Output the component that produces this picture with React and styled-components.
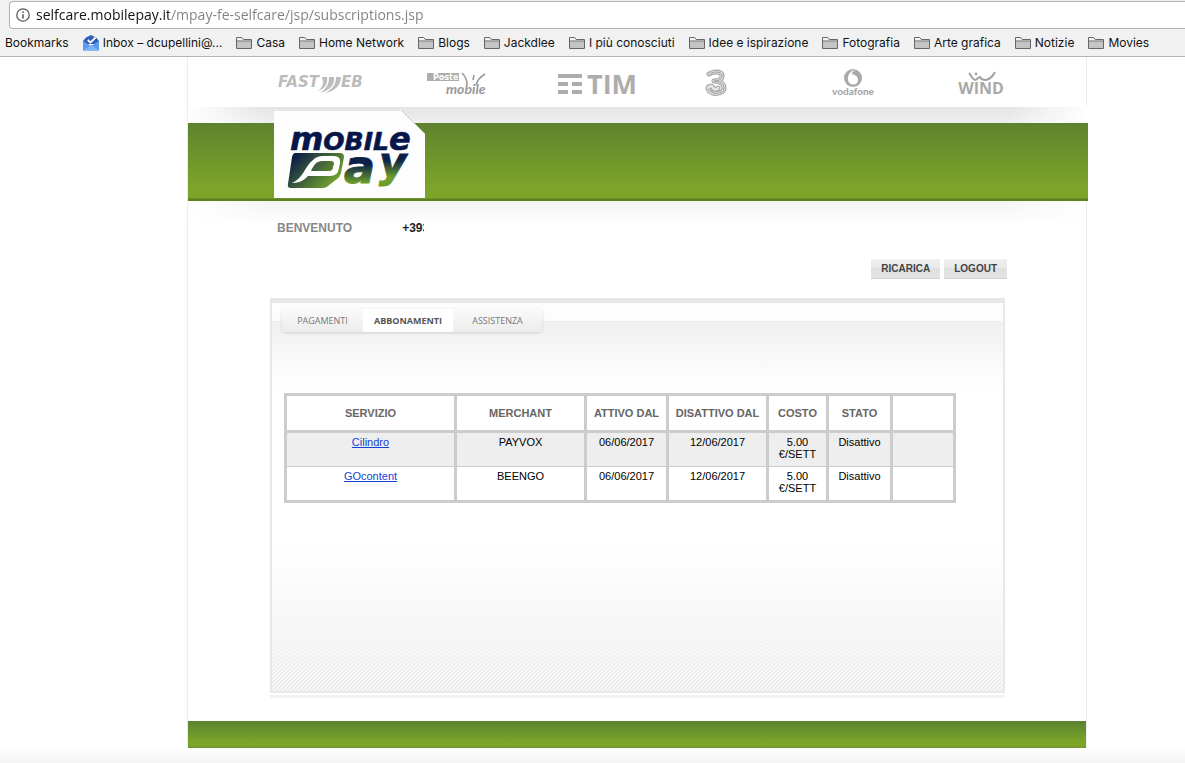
import React from "react";
import styled, { createGlobalStyle } from "styled-components";

const GlobalStyle = createGlobalStyle`
  * {
    box-sizing: border-box;
  }

  body {
    margin: 0;
    background: #fff;
    font-family: "Liberation Sans", Arial, sans-serif;
  }
`;

const Screen = styled.div`
  display: flex;
  flex-direction: column;
  min-height: 100vh;
`;

/* browser bar */

const Browser = styled.header`
  background: #f1f1f1;
  border-bottom: 1px solid #b4b4b4;
  padding-top: 1px;
  overflow: hidden;
  font-family: Inter, "Noto Sans", sans-serif;
`;

const Address = styled.label`
  display: flex;
  align-items: center;
  gap: 6px;
  height: 28px;
  margin-left: 9px;
  padding-left: 6px;
  background: #fff;
  border: 1px solid #b4b4b4;
  border-right: 0;
  border-radius: 4px 0 0 4px;
`;

const AddressInput = styled.input`
  flex: 1;
  min-width: 0;
  padding: 0;
  border: 0;
  outline: 0;
  font: 14px/20px "Open Sans", "Noto Sans", sans-serif;
  color: transparent;
  background: linear-gradient(90deg, #111 133px, #808080 133px);
  -webkit-background-clip: text;
  background-clip: text;
`;

const Bookmarks = styled.nav`
  display: flex;
  align-items: center;
  gap: 14px;
  height: 27px;
  padding-left: 5px;
`;

const Bookmark = styled.a`
  display: flex;
  align-items: center;
  flex: none;
  gap: 4px;
  color: #111;
  font-size: 12px;
  line-height: 16px;
  text-decoration: none;
  white-space: nowrap;
`;

/* page */

const Page = styled.div`
  margin: 0 98px 0 187px;
  border: 1px solid #ededed;
  border-width: 0 1px;
`;

const Operators = styled.div`
  display: grid;
  grid-template-columns: 136px 136px 142px 100px 172px 84px;
  justify-items: center;
  align-items: center;
  height: 50px;
  padding: 3px 0 0 65px;

  svg {
    display: block;
    overflow: visible;
  }
`;

const Banner = styled.div`
  margin-right: -2px;
  padding: 4px 0 3px 86px;
  background:
    linear-gradient(90deg, #fff, #fff0 80px calc(100% - 80px), #fff) top / 100% 16px no-repeat,
    linear-gradient(#e4e4e4, #efefef) top / 100% 16px no-repeat,
    linear-gradient(#5e8030, #62882e 8px, #7ba428 64px, #7ba428 75px, #5f8020 76px) 0 16px no-repeat;
`;

const Welcome = styled.div`
  display: flex;
  align-items: center;
  gap: 50px;
  padding: 20px 0 0 89px;
  height: 34px;
  background:
    linear-gradient(90deg, #fff, #fff0 80px calc(100% - 80px), #fff) top / 100% 21px no-repeat,
    linear-gradient(#f4f4f4, #fdfdfd) top / 100% 21px no-repeat;
  font-size: 12px;
  line-height: 14px;
  font-weight: bold;
  color: #888;
`;

const Phone = styled.span`
  width: 22px;
  overflow: hidden;
  color: #222;
`;

const Actions = styled.div`
  display: flex;
  justify-content: flex-end;
  gap: 4px;
  padding: 24px 79px 19px 0;
`;

const Action = styled.button`
  height: 20px;
  padding: 0 10px;
  border: 0;
  border-bottom: 1px solid #cfcfcf;
  background: linear-gradient(#f0f0f0, #e8e8e8 50%, #dfdfdf 50%, #e4e4e4);
  color: #444;
  font: bold 10px/12px "Liberation Sans", Arial, sans-serif;
`;

const PanelFrame = styled.div`
  margin: 0 81px 23px 82px;
  padding-bottom: 2px;
  border-bottom: 3px solid #f3f3f3;
`;

const Panel = styled.main`
  min-height: 395px;
  padding: 6px 10px;
  border: 2px solid #e8e8e8;
  border-top: 5px solid #e6e6e6;
  background:
    linear-gradient(#fdfdfd 18px, #fff0 18px),
    linear-gradient(#f0f0f0 18px, #fff 86px, #fff 240px, #fff0 100%),
    linear-gradient(135deg, #e6e6e6 12%, #f8f8f8 13% 49%, #e6e6e6 50% 62%, #f8f8f8 63%) 0 0 / 4px 4px;
`;

const Tabs = styled.nav`
  display: inline-flex;
  height: 23px;
  border-radius: 3px;
  background: linear-gradient(#fafafa, #ececec);
  box-shadow: 0 1px 3px #ccc;
`;

const Tab = styled.a`
  display: flex;
  align-items: center;
  justify-content: center;
  width: ${(p) => (p.$active ? "90px" : "89px")};
  background: ${(p) => (p.$active ? "#fff" : "none")};
  color: ${(p) => (p.$active ? "#555" : "#777")};
  font: ${(p) => (p.$active ? "bold" : "normal")} 9px/12px "Open Sans", "Noto Sans", sans-serif;
  text-decoration: none;

  &:first-child {
    width: 81px;
  }
`;

const Table = styled.table`
  width: 672px;
  margin: 61px 0 0 2px;
  border-collapse: collapse;
  table-layout: fixed;
  border: 3px solid #ccc;
  background: #fff;
  font-size: 11px;
  line-height: 12px;
  text-align: center;
`;

const Th = styled.th`
  width: ${(p) => p.$width};
  height: 37px;
  padding: 0;
  border: 3px solid #ccc;
  color: #666;
  white-space: nowrap;
`;

const Row = styled.tr`
  height: 35px;
  background: ${(p) => (p.$shaded ? "#eee" : "#fff")};
`;

const Td = styled.td`
  padding: 3px 4px;
  border: 3px solid #ccc;
  border-width: 1px 3px;
  vertical-align: top;
  color: #000;

  a {
    color: #1342d6;
  }
`;

const Footer = styled.footer`
  height: 27px;
  background: linear-gradient(#5e8230, #64902d 8px, #7ba428 20px, #7ba428 25px, #6d9130);
`;

const PageEnd = styled.div`
  flex: 1;
  background: linear-gradient(#fff, #f4f4f4);
`;

const LogoSvg = styled.svg`
  display: block;
`;

const folders = [
  "Casa",
  "Home Network",
  "Blogs",
  "Jackdlee",
  "I più conosciuti",
  "Idee e ispirazione",
  "Fotografia",
  "Arte grafica",
  "Notizie",
  "Movies",
];

const columns = [
  ["SERVIZIO", "170px"],
  ["MERCHANT", "130px"],
  ["ATTIVO DAL", "82px"],
  ["DISATTIVO DAL", "100px"],
  ["COSTO", "60px"],
  ["STATO", "64px"],
  ["", "auto"],
];

const subscriptions = [
  ["Cilindro", "PAYVOX", "06/06/2017", "12/06/2017", "5.00 €/SETT", "Disattivo"],
  ["GOcontent", "BEENGO", "06/06/2017", "12/06/2017", "5.00 €/SETT", "Disattivo"],
];

function InfoIcon() {
  return (
    <svg width="14" height="14" viewBox="0 0 14 14" fill="none" stroke="#5a5a5a">
      <circle cx="7" cy="7" r="6.2" strokeWidth="1.3" />
      <path d="M7 6.2v4.3M7 3.4v1.6" strokeWidth="1.6" />
    </svg>
  );
}

function FolderIcon() {
  return (
    <svg width="16" height="14" viewBox="0 0 16 14">
      <path d="M.5 12.5v-11h5.2l1.6 2h8.2v9z" fill="#f4f4f4" stroke="#666" />
      <path d="M1 5.5h14V12H1z" fill="#c4c4c4" />
      <path d="M.5 5h15" stroke="#666" />
    </svg>
  );
}

function InboxIcon() {
  return (
    <svg width="16" height="16" viewBox="0 0 16 16">
      <path d="M0 6l3-3.500L8 0l5 2.500L16 6v3H0z" fill="#2f5fb8" />
      <path d="M0 6l8 5 8-5v9.500H0z" fill="#5b9cf0" />
      <path d="M0 15.500L8 10l8 5.500z" fill="#79b2f8" />
      <path d="M4.800 5l2.600 2.600L12.500 2.500" fill="none" stroke="#fff" strokeWidth="1.800" />
    </svg>
  );
}

function FastwebLogo() {
  return (
    <svg width="86" height="24" viewBox="0 0 86 24" fill="#bcbcbc">
      <g fontFamily="DejaVu Sans" fontWeight="bold" fontStyle="italic" fontSize="15">
        <text x="0" y="15">FAST</text>
        <text x="63" y="15">EB</text>
      </g>
      <path d="M44 5h5c1 6-1 11-9 14 5-4 6-8 4-14z" />
      <path d="M51 5h5c1 7-3 13-14 16 7-5 9-9 9-16z" />
      <path d="M58 5h5c0 7-5 14-16 16 8-4 11-9 11-16z" />
    </svg>
  );
}

function PosteLogo() {
  return (
    <svg width="62" height="28" viewBox="0 0 62 28">
      <path d="M1 3h32v8H1z" fill="#adadad" />
      <text x="7" y="10" fill="#fff" fontFamily="DejaVu Sans" fontWeight="bold" fontSize="8">Poste</text>
      <text x="20" y="24" fill="#999" fontFamily="Lato" fontWeight="bold" fontStyle="italic" fontSize="14">mobile</text>
      <path d="M36 3c3 3 5 6 5 11M48 5l-1 5M59 4c-5 3-8 7-9 11" fill="none" stroke="#999" strokeWidth="1.500" />
    </svg>
  );
}

function TimLogo() {
  return (
    <svg width="78" height="24" viewBox="0 0 78 24" fill="#adadad">
      <path d="M1 2h24v4H1zM1 10h10v4H1zM15 10h10v4H15zM1 18h10v4H1zM15 18h10v4H15z" />
      <text x="30" y="22" fontFamily="Open Sans" fontWeight="bold" fontSize="27">TIM</text>
    </svg>
  );
}

function TreLogo() {
  return (
    <svg width="24" height="30" viewBox="0 0 24 30" fill="none" strokeLinecap="round" strokeLinejoin="round">
      <path d="M4 5c4-3 14-3 13 2 0 4-5 5-8 5 5 0 10 2 10 7 0 7-14 7-16 1 0-3 4-4 5-1 1 2 4 2 5 0" stroke="#a8a8a8" strokeWidth="5" />
      <path d="M4 5c4-3 14-3 13 2 0 4-5 5-8 5 5 0 10 2 10 7 0 7-14 7-16 1 0-3 4-4 5-1 1 2 4 2 5 0" stroke="#e6e6e6" strokeWidth="2.600" />
      <path d="M4 5c4-3 14-3 13 2 0 4-5 5-8 5 5 0 10 2 10 7 0 7-14 7-16 1" stroke="#999" strokeWidth="1" />
    </svg>
  );
}

function VodafoneLogo() {
  return (
    <svg width="46" height="30" viewBox="0 0 46 30" fill="#a9a9a9">
      <circle cx="23" cy="9" r="9" />
      <path d="M26 1c-3 1-4 2-4 4 4 1 6 3 6 6 0 6-9 6-10 0-1-5 3-10 8-10z" fill="#fff" />
      <text x="23" y="26" textAnchor="middle" fontFamily="Lato" fontWeight="900" fontSize="10">vodafone</text>
    </svg>
  );
}

function WindLogo() {
  return (
    <svg width="50" height="30" viewBox="0 0 50 30" fill="#a9a9a9">
      <path
        d="M13 4c2 2 3 6 6 7 2 0 3-3 5-3 1 2 3 3 6 3 4-1 7-4 9-8"
        fill="none"
        stroke="#a0a0a0"
        strokeWidth="2"
      />
      <circle cx="20" cy="5" r="1.400" />
      <text x="25" y="25" textAnchor="middle" fontFamily="Open Sans" fontWeight="bold" fontSize="16">WIND</text>
    </svg>
  );
}

function MobilePayLogo() {
  return (
    <LogoSvg width="151" height="87" viewBox="0 0 151 87" role="img" aria-label="Mobile Pay">
      <defs>
        <linearGradient id="badge" x1="0" y1="0" x2="1" y2="0.6">
          <stop offset="0.150" stopColor="#0d2148" />
          <stop offset="1" stopColor="#76a52c" />
        </linearGradient>
        <linearGradient id="letters" x1="0" y1="0" x2="0" y2="1">
          <stop offset="0.450" stopColor="#0d2148" />
          <stop offset="0.800" stopColor="#6d9e2a" />
        </linearGradient>
      </defs>
      <path d="M0 0h128l23 23v64H0z" fill="#fdfdfd" />
      <path d="M128 0l23 23" stroke="#c9cfc0" />
      <g fontFamily="DejaVu Sans" fontWeight="bold" fontStyle="italic">
        <text x="16" y="39" fill="#06164a" stroke="#06164a" strokeWidth="0.600" fontSize="32">
          m<tspan fontSize="25">OBIL</tspan>e
        </text>
        <text x="70" y="72" fill="url(#letters)" stroke="url(#letters)" fontSize="46">a</text>
        <text x="105" y="66" fill="url(#letters)" stroke="url(#letters)" fontSize="42">y</text>
      </g>
      <path d="M21 42h45q4 0 4 4l-3 16q-1 4-4 6l-9 7q-2 2-5 2H17q-4 0-3-4l4-27q1-4 3-4z" fill="url(#badge)" />
      <path
        d="M18 72C29 68 31 55 39 49c3-3 6-4 10-4h11q7 0 6 7l-1 5q-1 8-9 8H33l4-5h18q4 0 4-4l1-3q0-3-3-3h-8c-7 0-9 4-12 10-3 6-8 12-19 12z"
        fill="#fff"
      />
    </LogoSvg>
  );
}

function BrowserBar() {
  return (
    <Browser>
      <Address>
        <InfoIcon />
        <AddressInput
          aria-label="Address"
          defaultValue="selfcare.mobilepay.it/mpay-fe-selfcare/jsp/subscriptions.jsp"
        />
      </Address>
      <Bookmarks>
        <Bookmark href="#">Bookmarks</Bookmark>
        <Bookmark href="#">
          <InboxIcon />
          Inbox – dcupellini@…
        </Bookmark>
        {folders.map((name) => (
          <Bookmark href="#" key={name}>
            <FolderIcon />
            {name}
          </Bookmark>
        ))}
      </Bookmarks>
    </Browser>
  );
}

function Subscriptions() {
  return (
    <Table>
      <thead>
        <tr>
          {columns.map(([label, width]) => (
            <Th key={label} $width={width}>
              {label}
            </Th>
          ))}
        </tr>
      </thead>
      <tbody>
        {subscriptions.map(([service, ...cells], i) => (
          <Row key={service} $shaded={i % 2 === 0}>
            <Td>
              <a href="#">{service}</a>
            </Td>
            {cells.map((cell, n) => (
              <Td key={n}>{cell}</Td>
            ))}
            <Td />
          </Row>
        ))}
      </tbody>
    </Table>
  );
}

function App() {
  return (
    <Screen>
      <GlobalStyle />
      <BrowserBar />
      <Page>
        <Operators>
          <FastwebLogo />
          <PosteLogo />
          <TimLogo />
          <TreLogo />
          <VodafoneLogo />
          <WindLogo />
        </Operators>
        <Banner>
          <MobilePayLogo />
        </Banner>
        <Welcome>
          BENVENUTO
          <Phone>+393</Phone>
        </Welcome>
        <Actions>
          <Action>RICARICA</Action>
          <Action>LOGOUT</Action>
        </Actions>
        <PanelFrame>
          <Panel>
            <Tabs>
              <Tab href="#">PAGAMENTI</Tab>
              <Tab href="#" $active>
                ABBONAMENTI
              </Tab>
              <Tab href="#">ASSISTENZA</Tab>
            </Tabs>
            <Subscriptions />
          </Panel>
        </PanelFrame>
        <Footer />
      </Page>
      <PageEnd />
    </Screen>
  );
}

export default App;
